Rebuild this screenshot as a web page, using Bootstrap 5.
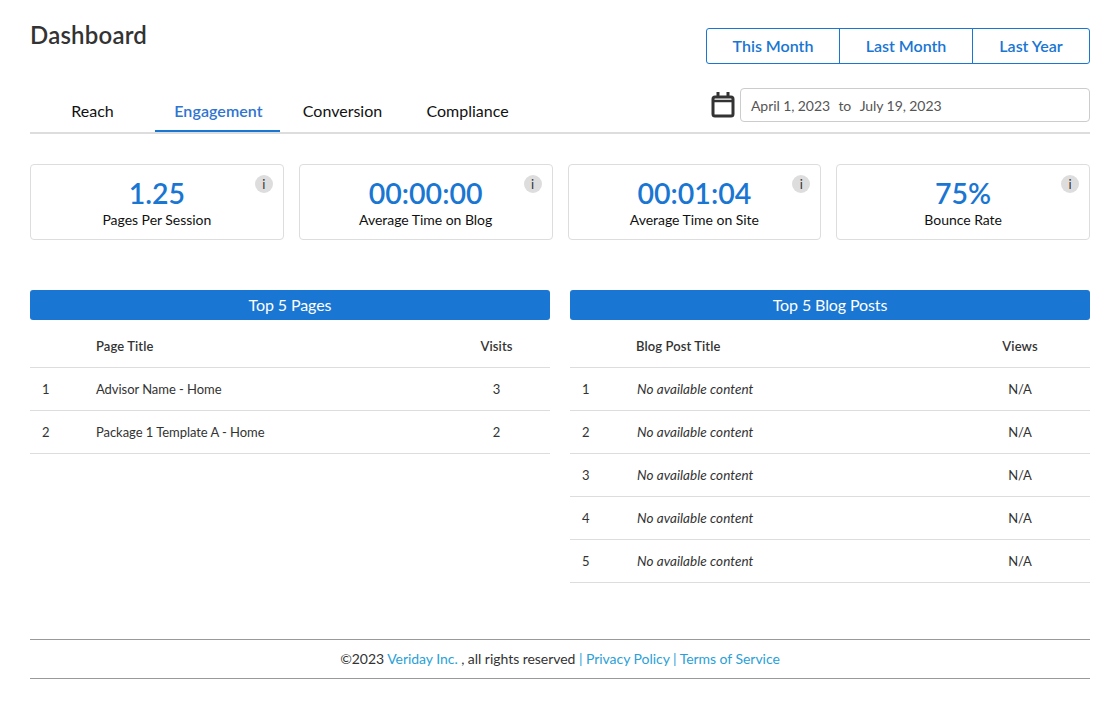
<!DOCTYPE html>
<html lang="en">
<head>
<meta charset="utf-8">
<title>Dashboard</title>
<link rel="stylesheet" href="https://cdn.jsdelivr.net/npm/bootstrap@5.3.0/dist/css/bootstrap.min.css">
<style>
body{font-family:Lato,"Liberation Sans",sans-serif;color:#333;background:#fff;font-size:14px;}
.page-wrap{padding:0 28px 0 30px;}
.head-row{height:88px;}
.page-title{font-family:Lato,sans-serif;font-size:24px;font-weight:600;letter-spacing:.2px;color:#333;line-height:29px;margin:20px 0 0;}
.range-group{margin-top:28px;height:36px;}
.range-group .btn{font-size:16px;font-weight:600;color:#1976d2;border-color:#1976d2;background:#fff;line-height:34px;border-radius:3px;padding:0;}
.range-a,.range-b{width:134px;}
.range-c{width:118px;}
.tab-row{height:46px;border-bottom:2px solid #ddd;}
.tab-row .nav-link{color:#111;font-size:16px;padding:0;height:44px;line-height:46px;text-align:center;border-bottom:2px solid transparent;}
.tab-row .nav-link.active{color:#2f74d0;font-weight:600;letter-spacing:.08px;border-bottom-color:#1976d2;padding-left:2px;}
.tab-a{width:125px}.tab-b{width:125px}.tab-c{width:125px;}.tab-d{width:125px;}
.date-box{width:350px;height:34px;border:1px solid #ccc;border-radius:4px;padding:0 10px;font-size:14px;color:#555;line-height:33px;white-space:nowrap;letter-spacing:-.08px;}
.date-to{margin:0 8.5px;}
.cal-icon{width:24px;height:26px;margin-right:5px;}
.date-zone{margin-bottom:10px;}
.kpi-row{gap:15px;margin-top:30px;}
.kpi-card{flex:1 1 0;height:76px;border:1px solid #ddd;border-radius:4px;position:relative;text-align:center;padding-top:10px;}
.kpi-val{font-size:28.5px;font-weight:600;color:#1976d2;line-height:36px;}
.kpi-lbl{font-size:14px;color:#111;line-height:17px;letter-spacing:-.03px;}
.info-dot{position:absolute;top:10px;right:10px;width:18px;height:18px;border-radius:50%;background:#ddd;font-size:13px;line-height:18px;text-align:center;color:#333;}
.tables-row{gap:20px;margin-top:50px;}
.tbl-col{flex:1 1 0;min-width:0;}
.tbl-bar{background:#1976d2;color:#fff;height:30px;line-height:30px;text-align:center;font-size:16px;border-radius:3px;letter-spacing:-.1px;}
.data-tbl{margin:0;table-layout:fixed;font-size:13px;color:#333;letter-spacing:-.05px;}
.data-tbl th,.data-tbl td{border-bottom:1px solid #ddd;padding:2px 0 0;height:43px;vertical-align:middle;font-weight:400;color:#333;}
.data-tbl thead th{height:47px;font-weight:600;padding-top:6px;letter-spacing:.1px;}
.data-tbl .n{width:66px;padding-left:12px;}
.data-tbl .v{width:107px;text-align:center;}
.data-tbl .w{width:140px;text-align:center;}
.data-tbl td.fst-italic{font-size:13.5px;padding-left:1px;letter-spacing:.05px;}
.foot-bar{margin-top:56px;height:40px;border-top:1px solid #999;border-bottom:1px solid #999;text-align:center;line-height:38px;font-size:14px;color:#333;letter-spacing:-.04px;}
.foot-bar a{color:#2a9fd8;text-decoration:none;}
.foot-sep{color:#2a9fd8;}
</style>
</head>
<body>
<div class="page-wrap">
  <div class="head-row d-flex justify-content-between align-items-start">
    <h1 class="page-title">Dashboard</h1>
    <div class="btn-group range-group" role="group">
      <button type="button" class="btn range-a">This Month</button>
      <button type="button" class="btn range-b">Last Month</button>
      <button type="button" class="btn range-c">Last Year</button>
    </div>
  </div>
  <div class="tab-row d-flex justify-content-between align-items-start">
    <ul class="nav">
      <li class="nav-item tab-a"><a class="nav-link" href="#">Reach</a></li>
      <li class="nav-item tab-b"><a class="nav-link active" href="#">Engagement</a></li>
      <li class="nav-item tab-c"><a class="nav-link" href="#">Conversion</a></li>
      <li class="nav-item tab-d"><a class="nav-link" href="#">Compliance</a></li>
    </ul>
    <div class="d-flex align-items-center date-zone">
      <svg class="cal-icon" viewBox="0 0 24 26" fill="none" stroke="#333" stroke-width="3">
        <rect x="2" y="5" width="20" height="19" rx="2"/>
        <path d="M2 9h20" stroke-width="2.5"/>
        <path d="M7 0v6M17 0v6" stroke-width="3"/>
      </svg>
      <div class="date-box">April 1, 2023<span class="date-to">to</span>July 19, 2023</div>
    </div>
  </div>
  <div class="kpi-row d-flex">
    <div class="kpi-card"><div class="kpi-val">1.25</div><div class="kpi-lbl">Pages Per Session</div><span class="info-dot">i</span></div>
    <div class="kpi-card"><div class="kpi-val">00:00:00</div><div class="kpi-lbl">Average Time on Blog</div><span class="info-dot">i</span></div>
    <div class="kpi-card"><div class="kpi-val">00:01:04</div><div class="kpi-lbl">Average Time on Site</div><span class="info-dot">i</span></div>
    <div class="kpi-card"><div class="kpi-val">75%</div><div class="kpi-lbl">Bounce Rate</div><span class="info-dot">i</span></div>
  </div>
  <div class="tables-row d-flex align-items-start">
    <div class="tbl-col">
      <div class="tbl-bar">Top 5 Pages</div>
      <table class="table data-tbl">
        <thead><tr><th class="n"></th><th>Page Title</th><th class="v">Visits</th></tr></thead>
        <tbody>
          <tr><td class="n">1</td><td>Advisor Name - Home</td><td class="v">3</td></tr>
          <tr><td class="n">2</td><td>Package 1 Template A - Home</td><td class="v">2</td></tr>
        </tbody>
      </table>
    </div>
    <div class="tbl-col">
      <div class="tbl-bar">Top 5 Blog Posts</div>
      <table class="table data-tbl">
        <thead><tr><th class="n"></th><th>Blog Post Title</th><th class="w">Views</th></tr></thead>
        <tbody>
          <tr><td class="n">1</td><td class="fst-italic">No available content</td><td class="w">N/A</td></tr>
          <tr><td class="n">2</td><td class="fst-italic">No available content</td><td class="w">N/A</td></tr>
          <tr><td class="n">3</td><td class="fst-italic">No available content</td><td class="w">N/A</td></tr>
          <tr><td class="n">4</td><td class="fst-italic">No available content</td><td class="w">N/A</td></tr>
          <tr><td class="n">5</td><td class="fst-italic">No available content</td><td class="w">N/A</td></tr>
        </tbody>
      </table>
    </div>
  </div>
  <div class="foot-bar">©2023 <a href="#">Veriday Inc.</a> , all rights reserved <span class="foot-sep">|</span> <a href="#">Privacy Policy</a> <span class="foot-sep">|</span> <a href="#">Terms of Service</a></div>
</div>
<script src="https://cdn.jsdelivr.net/npm/bootstrap@5.3.0/dist/js/bootstrap.bundle.min.js"></script>
</body>
</html>
